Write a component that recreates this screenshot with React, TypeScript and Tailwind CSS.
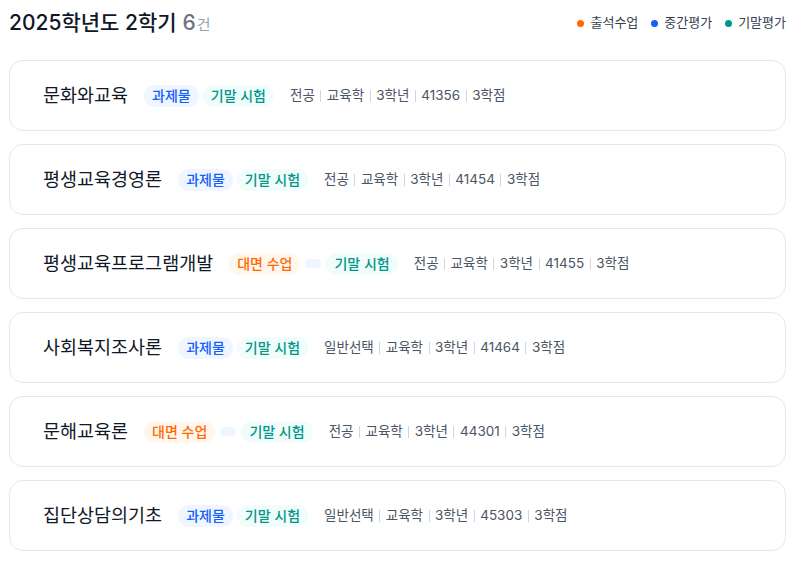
const courses = [
  { name: "문화와교육", tags: ["task", "final"], kind: "전공", code: "41356" },
  { name: "평생교육경영론", tags: ["task", "final"], kind: "전공", code: "41454" },
  { name: "평생교육프로그램개발", tags: ["class", "empty", "final"], kind: "전공", code: "41455" },
  { name: "사회복지조사론", tags: ["task", "final"], kind: "일반선택", code: "41464" },
  { name: "문해교육론", tags: ["class", "empty", "final"], kind: "전공", code: "44301" },
  { name: "집단상담의기초", tags: ["task", "final"], kind: "일반선택", code: "45303" },
];

// Inter for latin/digits, Noto CJK for hangul
const font = { fontFamily: 'Inter, "Noto Sans CJK KR", "Noto Sans", sans-serif' };

const Tag = ({ type }: { type: string }) => {
  if (type === "empty") return <span className="mx-[1px] h-[9px] w-4 rounded-full bg-blue-50" />;
  if (type === "task")
    return (
      <span className="flex h-[22px] items-center rounded-full bg-blue-50 px-[8px] text-[14px] font-medium text-blue-600">
        과제물
      </span>
    );
  if (type === "class")
    return (
      <span className="flex h-[22px] items-center rounded-full bg-orange-50 px-[8px] text-[14px] font-medium text-orange-500">
        대면 수업
      </span>
    );
  return (
    <span className="flex h-[22px] items-center rounded-full bg-teal-50 px-[8px] text-[14px] font-medium text-teal-600">
      기말 시험
    </span>
  );
};

const Sep = () => <span className="mx-[5.5px] h-3 w-px bg-gray-300" />;

export default function App() {
  return (
    <div className="min-h-[562px] bg-white pl-[9px] pr-[8px] pt-[9px]" style={font}>
      <div className="flex h-[28px] items-center justify-between">
        <h1 className="flex items-baseline text-[21px] font-medium text-gray-900">
          2025학년도 2학기
          <span className="ml-[6px] text-gray-500">6</span>
          <span className="ml-[1px] text-[15px] font-normal text-gray-400">건</span>
        </h1>
        <div className="flex items-center gap-[13px] text-[13px] text-gray-700">
          <span className="flex items-center gap-[6px]">
            <span className="h-[7px] w-[7px] rounded-full bg-orange-500" />
            출석수업
          </span>
          <span className="flex items-center gap-[6px]">
            <span className="h-[7px] w-[7px] rounded-full bg-blue-600" />
            중간평가
          </span>
          <span className="flex items-center gap-[6px]">
            <span className="h-[7px] w-[7px] rounded-full bg-teal-600" />
            기말평가
          </span>
        </div>
      </div>

      <div className="mt-[23px] flex flex-col gap-[13px]">
        {courses.map((c) => (
          <div
            key={c.code}
            className="flex h-[71px] items-center rounded-[14px] border border-gray-200 bg-white pl-[33px]"
          >
            <span className="text-[18.5px] font-normal text-gray-900">{c.name}</span>
            <div className="ml-4 flex items-center gap-1">
              {c.tags.map((t, i) => (
                <Tag key={i} type={t} />
              ))}
            </div>
            <div className="ml-4 flex items-center text-[13.5px] text-gray-600">
              <span>{c.kind}</span>
              <Sep />
              <span>교육학</span>
              <Sep />
              <span>3학년</span>
              <Sep />
              <span>{c.code}</span>
              <Sep />
              <span>3학점</span>
            </div>
          </div>
        ))}
      </div>
    </div>
  );
}
